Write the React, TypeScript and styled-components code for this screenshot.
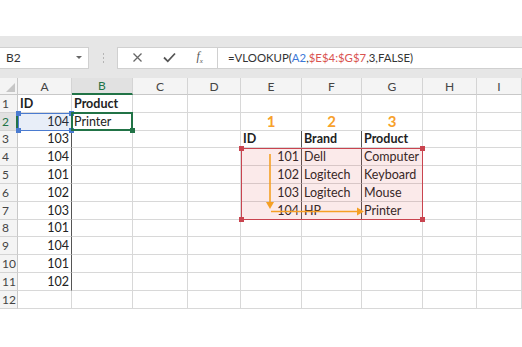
import React from "react";
import styled, { createGlobalStyle } from "styled-components";

const GlobalStyle = createGlobalStyle`
  body {
    margin: 0;
    background: #ffffff;
    font-family: Lato, "Liberation Sans", sans-serif;
  }
`;

const COLS = [18, 54, 61, 55, 53, 61, 60, 61, 54, 45];
const HEAD_H = 17;
const ROW_H = 17.8;
const LETTERS = ["A", "B", "C", "D", "E", "F", "G", "H", "I"];

const Page = styled.div`
  width: 522px;
  height: 347px;
  overflow: hidden;
  display: flex;
  flex-direction: column;
`;

const TopSpace = styled.div`
  height: 36px;
  background: #ffffff;
`;

const FormulaBar = styled.div`
  height: 42px;
  background: #e6e6e6;
  display: flex;
  align-items: center;
  padding-top: 1px;
  box-sizing: border-box;
`;

const NameBox = styled.div`
  width: 89px;
  height: 22px;
  background: #fff;
  border: 1px solid #d0d0d0;
  border-left: none;
  box-sizing: border-box;
  display: flex;
  align-items: center;
  justify-content: space-between;
  padding: 0 6px 0 6px;
  font-size: 12px;
  color: #333;
`;

const DropArrow = styled.span`
  width: 0;
  height: 0;
  border-left: 3px solid transparent;
  border-right: 3px solid transparent;
  border-top: 3px solid #666;
`;

const Dots = styled.div`
  width: 28px;
  display: flex;
  flex-direction: column;
  align-items: center;
  gap: 2px;
  span {
    width: 1px;
    height: 2px;
    background: #b5b5b5;
  }
`;

const IconBox = styled.div`
  width: 100px;
  height: 22px;
  background: #fff;
  border: 1px solid #d0d0d0;
  border-right: none;
  box-sizing: border-box;
  display: flex;
  align-items: center;
  justify-content: space-around;
  padding: 0 4px;
  color: #666;
`;

const Fx = styled.span`
  font-family: "Liberation Serif", serif;
  font-style: italic;
  font-size: 12px;
  color: #555;
  sub {
    font-size: 7px;
  }
`;

const FormulaInput = styled.div`
  flex: 1;
  height: 22px;
  background: #fff;
  border: 1px solid #d0d0d0;
  border-right: none;
  box-sizing: border-box;
  display: flex;
  align-items: center;
  padding-left: 10px;
  font-size: 11.4px;
  color: #333;
  white-space: nowrap;
`;

const Ref = styled.span<{ $c: string }>`
  color: ${(p) => p.$c};
`;

const SheetWrap = styled.div`
  position: relative;
`;

const Sheet = styled.div`
  display: grid;
  grid-template-columns: ${COLS.map((c) => c + "px").join(" ")};
  grid-template-rows: ${HEAD_H}px repeat(12, ${ROW_H}px);
`;

const ColHead = styled.div<{ $active?: boolean }>`
  background: ${(p) => (p.$active ? "#e1e1e1" : "#f4f4f4")};
  border-right: 1px solid #d4d4d4;
  border-bottom: ${(p) => (p.$active ? "2px solid #217346" : "1px solid #c8c8c8")};
  box-sizing: border-box;
  display: flex;
  align-items: center;
  justify-content: center;
  font-size: 12px;
  color: ${(p) => (p.$active ? "#217346" : "#444")};
`;

const Corner = styled.div`
  background: #f4f4f4;
  border-right: 1px solid #c8c8c8;
  border-bottom: 1px solid #c8c8c8;
  box-sizing: border-box;
  position: relative;
  &::after {
    content: "";
    position: absolute;
    right: 2px;
    bottom: 2px;
    border-left: 9px solid transparent;
    border-bottom: 9px solid #c6c6c6;
  }
`;

const RowHead = styled.div<{ $active?: boolean }>`
  background: ${(p) => (p.$active ? "#e1e1e1" : "#f4f4f4")};
  border-right: ${(p) => (p.$active ? "2px solid #217346" : "1px solid #c8c8c8")};
  border-bottom: 1px solid #d4d4d4;
  box-sizing: border-box;
  display: flex;
  align-items: center;
  padding-left: 2px;
  font-size: 12px;
  color: ${(p) => (p.$active ? "#217346" : "#444")};
`;

const Cell = styled.div<{
  $align?: "left" | "right" | "center";
  $bold?: boolean;
  $orange?: boolean;
  $edge?: boolean;
}>`
  border-right: ${(p) => (p.$edge ? "1.5px solid #555" : "1px solid #d8d8d8")};
  border-bottom: 1px solid #d8d8d8;
  box-sizing: border-box;
  display: flex;
  align-items: center;
  justify-content: ${(p) =>
    p.$align === "right" ? "flex-end" : p.$align === "center" ? "center" : "flex-start"};
  padding: 0 2px;
  font-size: ${(p) => (p.$orange ? "15px" : "12.5px")};
  font-weight: ${(p) => (p.$bold || p.$orange ? 700 : 400)};
  color: ${(p) => (p.$orange ? "#f7a12b" : "#222")};
  white-space: nowrap;
  overflow: visible;
`;

const Range = styled.div<{ $color: string; $fill: string; $w: number }>`
  position: absolute;
  box-sizing: border-box;
  border: ${(p) => p.$w}px solid ${(p) => p.$color};
  background: ${(p) => p.$fill};
  pointer-events: none;
`;

const Handle = styled.span<{ $color: string; $pos: string }>`
  position: absolute;
  width: 5px;
  height: 5px;
  background: ${(p) => p.$color};
  ${(p) => p.$pos}
`;

const Arrows = styled.svg`
  position: absolute;
  left: 0;
  top: 0;
  pointer-events: none;
`;

const colX = (i: number) => COLS.slice(0, i + 1).reduce((a, b) => a + b, 0);
const rowY = (r: number) => HEAD_H + (r - 1) * ROW_H;

type CellDef = {
  v?: string;
  align?: "left" | "right" | "center";
  bold?: boolean;
  orange?: boolean;
};

const data: Record<string, CellDef> = {
  A1: { v: "ID", bold: true },
  B1: { v: "Product", bold: true },
  A2: { v: "104", align: "right" },
  B2: { v: "Printer" },
  A3: { v: "103", align: "right" },
  A4: { v: "104", align: "right" },
  A5: { v: "101", align: "right" },
  A6: { v: "102", align: "right" },
  A7: { v: "103", align: "right" },
  A8: { v: "101", align: "right" },
  A9: { v: "104", align: "right" },
  A10: { v: "101", align: "right" },
  A11: { v: "102", align: "right" },
  E2: { v: "1", align: "center", orange: true },
  F2: { v: "2", align: "center", orange: true },
  G2: { v: "3", align: "center", orange: true },
  E3: { v: "ID", bold: true },
  F3: { v: "Brand", bold: true },
  G3: { v: "Product", bold: true },
  E4: { v: "101", align: "right" },
  E5: { v: "102", align: "right" },
  E6: { v: "103", align: "right" },
  E7: { v: "104", align: "right" },
  F4: { v: "Dell" },
  F5: { v: "Logitech" },
  F6: { v: "Logitech" },
  F7: { v: "HP" },
  G4: { v: "Computer" },
  G5: { v: "Keyboard" },
  G6: { v: "Mouse" },
  G7: { v: "Printer" },
};

const hasEdge = (col: string, row: number) =>
  (col === "A" && row >= 2 && row <= 11) ||
  ((col === "E" || col === "F") && row >= 3 && row <= 7);

const corners = (c: string) => [
  <Handle key="tl" $color={c} $pos="left:-3px;top:-3px;" />,
  <Handle key="tr" $color={c} $pos="right:-3px;top:-3px;" />,
  <Handle key="bl" $color={c} $pos="left:-3px;bottom:-3px;" />,
  <Handle key="br" $color={c} $pos="right:-3px;bottom:-3px;" />,
];

export default function App() {
  const rows = Array.from({ length: 12 }, (_, i) => i + 1);
  return (
    <Page>
      <GlobalStyle />
      <TopSpace />
      <FormulaBar>
        <NameBox>
          B2
          <DropArrow />
        </NameBox>
        <Dots>
          <span />
          <span />
          <span />
        </Dots>
        <IconBox>
          <svg width="11" height="11" viewBox="0 0 11 11">
            <path d="M1.5 1.5 L9.5 9.5 M9.5 1.5 L1.5 9.5" stroke="#666" strokeWidth="1.3" />
          </svg>
          <svg width="13" height="11" viewBox="0 0 13 11">
            <path d="M1 5.5 L4.8 9.3 L12 1.5" stroke="#555" strokeWidth="1.8" fill="none" />
          </svg>
          <Fx>
            f<sub>x</sub>
          </Fx>
        </IconBox>
        <FormulaInput>
          =VLOOKUP(<Ref $c="#3c78d8">A2</Ref>,<Ref $c="#d9534f">$E$4:$G$7</Ref>,3,FALSE)
        </FormulaInput>
      </FormulaBar>
      <SheetWrap>
        <Sheet>
          <Corner />
          {LETTERS.map((l) => (
            <ColHead key={l} $active={l === "B"}>
              {l}
            </ColHead>
          ))}
          {rows.map((r) => (
            <React.Fragment key={r}>
              <RowHead $active={r === 2}>{r}</RowHead>
              {LETTERS.map((l) => {
                const d = data[l + r] || {};
                return (
                  <Cell
                    key={l}
                    $align={d.align}
                    $bold={d.bold}
                    $orange={d.orange}
                    $edge={hasEdge(l, r)}
                  >
                    {d.v}
                  </Cell>
                );
              })}
            </React.Fragment>
          ))}
        </Sheet>

        <Range
          $color="#4a7bd0"
          $fill="rgba(68,114,196,0.12)"
          $w={1.5}
          style={{ left: colX(0), top: rowY(2), width: COLS[1], height: ROW_H }}
        >
          {corners("#4a7bd0")}
        </Range>

        <Range
          $color="#217346"
          $fill="transparent"
          $w={2}
          style={{ left: colX(1) - 1, top: rowY(2) - 1, width: COLS[2] + 1, height: ROW_H + 1 }}
        >
          <Handle $color="#217346" $pos="right:-4px;bottom:-4px;" />
        </Range>

        <Range
          $color="#c9444f"
          $fill="rgba(220,80,80,0.12)"
          $w={1.5}
          style={{
            left: colX(4),
            top: rowY(4),
            width: COLS[5] + COLS[6] + COLS[7],
            height: ROW_H * 4,
          }}
        >
          {corners("#c9444f")}
        </Range>

        <Arrows width="522" height="240">
          <path d="M270 76 L270 126" stroke="#f5a024" strokeWidth="1.6" />
          <path d="M266 124 L270 131 L274 124 Z" fill="#f5a024" />
          <path d="M271 133.5 L358 133.5" stroke="#f5a024" strokeWidth="1.6" />
          <path d="M357 129.5 L364 133.5 L357 137.5 Z" fill="#f5a024" />
        </Arrows>
      </SheetWrap>
    </Page>
  );
}
